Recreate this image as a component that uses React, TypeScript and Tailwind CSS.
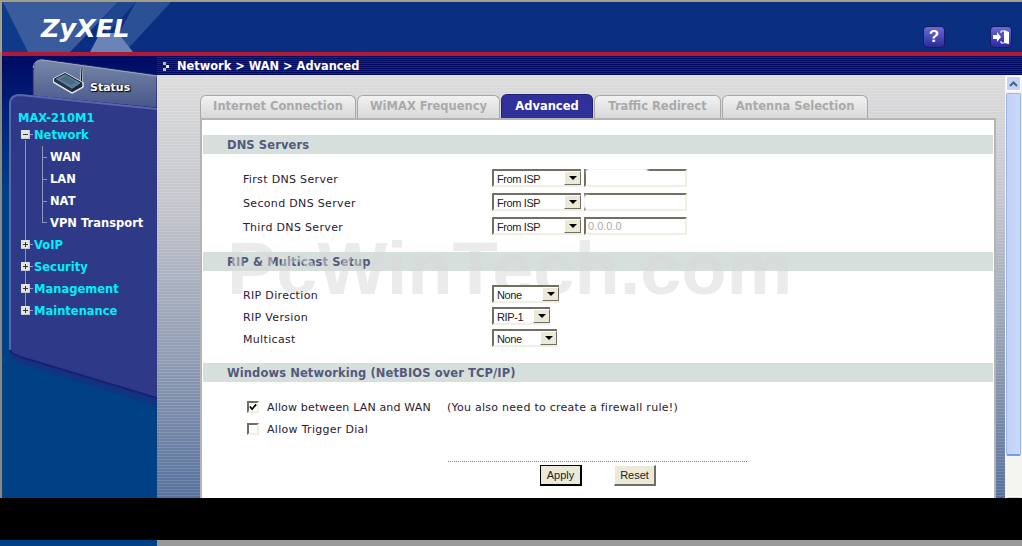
import React from "react";

const tabs = [
  { label: "Internet Connection", width: "w-[156px]" },
  { label: "WiMAX Frequency", width: "w-[143px]" },
  { label: "Advanced", width: "w-[92px]", active: true },
  { label: "Traffic Redirect", width: "w-[127px]" },
  { label: "Antenna Selection", width: "w-[146px]" },
];

const menuGroups = ["VoIP", "Security", "Management", "Maintenance"];
const wanItems = ["WAN", "LAN", "NAT", "VPN Transport"];

const TreeBox: React.FC<{ open?: boolean }> = ({ open }) => (
  <svg width="13" height="9" viewBox="0 0 13 9" className="shrink-0">
    <rect x="0" y="0" width="9" height="9" fill="#c8c8c8" />
    <rect x="0" y="0" width="8" height="8" fill="#e4e4e4" />
    <rect x="2" y="4" width="5" height="1" fill="#333" />
    {!open && <rect x="4" y="2" width="1" height="5" fill="#333" />}
    <rect x="9" y="4" width="3" height="1" fill="#9aa0c8" />
  </svg>
);

const SidebarArt: React.FC = () => (
  <svg className="absolute inset-0" width="155" height="442" viewBox="2 56 155 442">
    <defs>
      <linearGradient id="side" x1="0" y1="0" x2="0" y2="1">
        <stop offset="0" stopColor="#000a62" />
        <stop offset="0.12" stopColor="#00207a" />
        <stop offset="0.3" stopColor="#004085" />
        <stop offset="1" stopColor="#004085" />
      </linearGradient>
      <linearGradient id="statusTab" x1="0" y1="0" x2="0" y2="1">
        <stop offset="0" stopColor="#7a88a8" />
        <stop offset="1" stopColor="#46568a" />
      </linearGradient>
    </defs>
    <rect x="2" y="56" width="155" height="442" fill="url(#side)" />
    <path d="M10 350 L10 355 Q12 362 20 364 L157 406 L157 398 Z" fill="#1d2a80" opacity="0.55" />
    <path d="M33 96 L33 70 Q34 59 42 59 L157 75 L157 108 Z" fill="url(#statusTab)" stroke="#1a2460" strokeWidth="1" />
    <path d="M33 68 Q34 60 42 60 L157 76" fill="none" stroke="#9aa6c0" strokeWidth="1" />
    <path d="M10 350 L10 104 Q10 94 20 94 L157 108 L157 398 L24 358 Q12 354 10 350 Z" fill="#2e3a87" />
    <path d="M10 350 L10 104 Q10 95 20 95 L157 109" fill="none" stroke="#5866b0" strokeWidth="2" />
    <path d="M10 350 Q12 355 24 358 L157 398" fill="none" stroke="#1a2070" strokeWidth="2" />
    <path d="M25.5 140 V312 M42.5 146 V222.5 M42 157.5 H47 M42 179.5 H47 M42 201.5 H47 M42 222.5 H47" stroke="#8c94c4" strokeWidth="1" fill="none" />
  </svg>
);

const RouterIcon: React.FC = () => (
  <svg width="34" height="29" viewBox="0 0 34 29" className="shrink-0">
    <path d="M0.5 12 L12 6 L30 16 L30 20 L19 26 L0.5 15 Z" fill="#000" stroke="#dfe3ee" strokeWidth="1.5" strokeLinejoin="round" />
    <path d="M29 1 L28.4 14" stroke="#eef0f6" strokeWidth="2.4" />
    <path d="M29 1 L28.4 14" stroke="#111" strokeWidth="1.2" />
    <path d="M1.5 12 L12 6.5 L29 16 L19 22.5 Z" fill="#5a7a96" stroke="#10182c" strokeWidth="1" />
    <path d="M1.5 12 L1.5 14.5 L19 25 L19 22.5 Z" fill="#26384e" />
    <path d="M19 22.5 L19 25 L29 19.5 L29 16 Z" fill="#1a2a40" />
    <path d="M7 12 L13 9 L23 15 L18 18 Z" fill="#4a6880" />
  </svg>
);

const Header: React.FC = () => (
  <header className="relative flex h-[52px] shrink-0 items-start border-t-2 border-l-2 border-[#a39e86] bg-[#0b2f80]">
    <svg className="absolute inset-0" width="180" height="50" viewBox="2 2 180 50">
      <path d="M2 2 L15 2 L38 52 L2 52 Z" fill="#0f3a8c" />
      <path d="M3 2 L118 2 L70 52 L28 52 Z" fill="#3a5c9c" />
      <path d="M118 2 L136 2 L108 33 L100 22 Z" fill="#1e4690" />
      <path d="M136 2 L171 2 L125 52 L115 40 Z" fill="#2b5096" />
      <path d="M100 33 L118 33 L133 52 L90 52 Z" fill="#6a84b8" />
    </svg>
    <div className="relative mt-[8px] ml-[39px] text-[25.5px] leading-[36px] font-bold italic text-white">
      ZyXEL
    </div>
    <div className="relative mt-[24px] mr-[10px] ml-auto flex gap-[45px]">
      <div className="flex h-[22px] w-[22px] items-center justify-center rounded-[4px] border border-[#1a1a60] bg-gradient-to-b from-[#6a6ad8] to-[#2a2a98] text-[17px] font-bold text-white font-['Liberation_Sans',sans-serif]">
        ?
      </div>
      <div className="flex h-[22px] w-[22px] items-center justify-center rounded-[4px] border border-[#1a1a60] bg-gradient-to-b from-[#6a6ad8] to-[#2a2a98]">
        <svg width="18" height="16" viewBox="0 0 18 16">
          <path d="M1 6 H5 V3 L9 8 L5 13 V10 H1 Z" fill="#fff" />
          <path d="M9 2 H12 M9 14 H12 M9 2 V4 M9 12 V14" stroke="#fff" strokeWidth="1" />
          <path d="M12 1 L17 3 V15 L12 14 Z" fill="#fff" />
        </svg>
      </div>
    </div>
  </header>
);

const Sidebar: React.FC = () => (
  <aside className="relative w-[157px] shrink-0 border-l-2 border-[#8a8a80]">
    <SidebarArt />
    <div className="relative flex items-center pt-[11px] pl-[51px]">
      <RouterIcon />
      <span className="mt-[13px] ml-[3px] text-[11px] font-bold text-white [text-shadow:1px_1px_1px_#000,0_0_2px_#000]">Status</span>
    </div>
    <nav className="relative mt-[15px] flex flex-col pl-[16px] text-[11.5px] leading-[22px] font-bold">
      <div className="h-[12px] leading-[12px] text-[#00f0f8]">MAX-210M1</div>
      <div className="flex h-[22px] items-center pl-[3px] text-[#00f0f8]">
        <TreeBox open />
        <span>Network</span>
      </div>
      {wanItems.map((item) => (
        <div key={item} className="h-[22px] pl-[32px] text-white">{item}</div>
      ))}
      {menuGroups.map((item) => (
        <div key={item} className="flex h-[22px] items-center pl-[3px] text-[#00f0f8]">
          <TreeBox />
          <span>{item}</span>
        </div>
      ))}
    </nav>
  </aside>
);

const Select: React.FC<{ value: string; width: string }> = ({ value, width }) => (
  <div className={`relative z-10 flex h-[18px] items-center justify-between border-2 border-r-0 border-b-[#f1efe2] border-t-[#716f64] border-l-[#716f64] bg-white ${width}`}>
    <span className="mt-[2px] pl-[3px] text-[11px] tracking-[-0.4px] text-[#222] font-['Liberation_Sans',sans-serif]">{value}</span>
    <span className="flex h-full w-[17px] items-center justify-center border border-[#fff] border-r-[#716f64] border-b-[#716f64] bg-[#ece9d8]">
      <span className="h-0 w-0 border-x-[4px] border-t-[4px] border-x-transparent border-t-black" />
    </span>
  </div>
);

const IpInput: React.FC<{ value?: string; smudge?: "top" | "left" }> = ({ value, smudge }) => (
  <div className="relative h-[18px] w-[103px] border-2 border-r-[#f1efe2] border-b-[#f1efe2] border-t-[#716f64] border-l-[#716f64] bg-white pl-[2px] text-[11px] leading-[15px] text-[#aaa] font-['Liberation_Sans',sans-serif]">
    {value}
    {smudge === "top" && <span className="absolute -top-[3px] left-0 h-[6px] w-[62px] rounded-full bg-white blur-[1px]" />}
    {smudge === "left" && <span className="absolute top-0 -left-[3px] h-[14px] w-[7px] rounded-full bg-white blur-[1px]" />}
  </div>
);

const SectionBar: React.FC<{ title: string }> = ({ title }) => (
  <div className="mx-px h-[19px] bg-[#d7dfdd] pl-[24px] text-[11.5px] leading-[20px] font-bold tracking-[0.1px] text-[#55597c]">{title}</div>
);

const FormRow: React.FC<{ label: string; className: string; children: React.ReactNode }> = ({ label, className, children }) => (
  <div className={`flex items-center pl-[41px] ${className}`}>
    <span className="relative z-10 mt-[4px] w-[249px] text-[11px] tracking-[0.33px] text-[#2a2030]">{label}</span>
    {children}
  </div>
);

const CheckBox: React.FC<{ checked?: boolean }> = ({ checked }) => (
  <span className="flex h-[12px] w-[12px] shrink-0 items-center justify-center border-2 border-r-[#f1efe2] border-b-[#f1efe2] border-t-[#716f64] border-l-[#716f64] bg-white">
    {checked && (
      <svg width="9" height="8" viewBox="0 0 9 8">
        <path d="M1 3.5 L3.5 6.5 L8 1" stroke="#000" strokeWidth="2" fill="none" />
      </svg>
    )}
  </span>
);

const TabCard: React.FC = () => (
  <div className="flex flex-1 flex-col">
    <div className="flex h-[23px] shrink-0 items-end">
      {tabs.map((tab) => (
        <div
          key={tab.label}
          className={
            tab.active
              ? `${tab.width} mr-[1px] flex h-[24px] items-center justify-center rounded-t-[6px] border border-b-0 border-[#222277] bg-[#30309a] text-[11.5px] font-bold text-white`
              : `${tab.width} mr-[1px] flex h-[23px] items-center justify-center rounded-t-[6px] border border-b-0 border-[#a8a8a8] bg-gradient-to-b from-[#f2f2f2] to-[#d8d8d8] text-[11.5px] font-bold text-[#aaaaaa]`
          }
        >
          {tab.label}
        </div>
      ))}
    </div>
    <div className="flex-1 border-t-2 border-r-2 border-l-2 border-[#b4b4b4] bg-white pt-[15px]">
      <SectionBar title="DNS Servers" />
      <div className="flex flex-col pt-[12px] pb-[14px]">
        {["First DNS Server", "Second DNS Server", "Third DNS Server"].map((label, i) => (
          <FormRow key={label} label={label} className="h-[24px]">
            <Select value="From ISP" width="w-[89px]" />
            <div className="ml-[3px]">
              <IpInput value={i === 2 ? "0.0.0.0" : ""} smudge={i === 0 ? "top" : i === 1 ? "left" : undefined} />
            </div>
          </FormRow>
        ))}
      </div>
      <SectionBar title="RIP & Multicast Setup" />
      <div className="flex flex-col pt-[12px] pb-[14px]">
        <FormRow label="RIP Direction" className="h-[22px]"><Select value="None" width="w-[67px]" /></FormRow>
        <FormRow label="RIP Version" className="h-[22px]"><Select value="RIP-1" width="w-[58px]" /></FormRow>
        <FormRow label="Multicast" className="h-[22px]"><Select value="None" width="w-[65px]" /></FormRow>
      </div>
      <SectionBar title="Windows Networking (NetBIOS over TCP/IP)" />
      <div className="flex flex-col pt-[14px] pl-[45px] text-[11px] text-[#2a2030]">
        <div className="flex h-[22px] items-center">
          <CheckBox checked />
          <span className="mt-[3px] ml-[8px] w-[180px] tracking-[0.16px]">Allow between LAN and WAN</span>
          <span className="mt-[3px] tracking-[0.26px]">(You also need to create a firewall rule!)</span>
        </div>
        <div className="flex h-[22px] items-center">
          <CheckBox />
          <span className="mt-[3px] ml-[8px] tracking-[0.3px]">Allow Trigger Dial</span>
        </div>
      </div>
      <div className="mt-[21px] ml-[246px] w-[299px] border-t border-dotted border-[#808080]" />
      <div className="mt-[3px] ml-[338px] flex gap-[32px] text-[11px] text-[#222] font-['Liberation_Sans',sans-serif]">
        <div className="flex h-[21px] w-[42px] items-center justify-center border border-r-2 border-b-2 border-black bg-[#ece9d8]">Apply</div>
        <div className="flex h-[21px] w-[42px] items-center justify-center border border-r-2 border-b-2 border-[#fff] border-r-[#716f64] border-b-[#716f64] bg-[#ece9d8]">Reset</div>
      </div>
    </div>
  </div>
);

const Scrollbar: React.FC = () => (
  <div className="flex w-[17px] shrink-0 flex-col overflow-hidden bg-[#f4f4f0] px-[1px] pt-[1px]">
    <div className="flex h-[15px] shrink-0 items-center justify-center rounded-[2px] border border-[#fff] bg-[#c4d4f8]">
      <svg width="9" height="6" viewBox="0 0 9 6">
        <path d="M1 5 L4.5 1.5 L8 5" stroke="#4d6185" strokeWidth="2" fill="none" />
      </svg>
    </div>
    <div className="mt-[2px] h-[363px] shrink-0 rounded-[2px] border border-b-2 border-[#9db4e6] border-b-[#7a9ce0] bg-gradient-to-r from-[#c0d0f8] to-[#ccd9fa]" />
    <div className="mt-[40px] h-[15px] shrink-0 rounded-[2px] border border-[#fff] bg-[#c4d4f8]" />
  </div>
);

const App: React.FC = () => {
  return (
    <div className="relative flex h-[546px] w-[1022px] flex-col overflow-hidden bg-[#999999] text-[11px] font-['DejaVu_Sans',sans-serif]">
      <Header />
      <div className="h-[4px] shrink-0 border-l-2 border-[#8a8a80] bg-[#b01a35]" />
      <main className="flex h-[442px] shrink-0">
        <Sidebar />
        <div className="flex min-w-0 flex-1 flex-col">
          <div className="flex h-[19px] shrink-0 items-center bg-[repeating-linear-gradient(180deg,#000a62_0_1px,#0b2a80_1px_2px)] pt-[3px] pl-[6px] text-[11.4px] font-bold text-white">
            <svg width="8" height="10" viewBox="0 0 8 10" className="mr-[6px]">
              <rect x="0" y="0" width="3" height="3" fill="#bbb" />
              <rect x="3" y="3" width="3" height="3" fill="#eee" />
              <rect x="0" y="6" width="3" height="3" fill="#bbb" />
            </svg>
            Network &gt; WAN &gt; Advanced
          </div>
          <div className="flex min-h-0 flex-1">
            <div className="flex min-w-0 flex-1 bg-[repeating-linear-gradient(180deg,rgba(255,255,255,0.14)_0_1px,transparent_1px_3px),linear-gradient(180deg,#dcdcdc_0%,#c4c6cc_30%,#8a98b0_70%,#56709c_100%)] pt-[20px] pr-[9px] pl-[43px]">
              <TabCard />
            </div>
            <Scrollbar />
          </div>
        </div>
      </main>
      <div className="h-[42px] shrink-0 bg-black" />
      <div className="flex h-[6px] shrink-0">
        <div className="w-[157px] bg-[#004085]" />
      </div>
      <div className="pointer-events-none absolute top-[229px] left-[227px] text-[74px] leading-[80px] font-bold whitespace-nowrap text-[rgba(215,215,215,0.5)] font-['Liberation_Sans',sans-serif]">
        PcWinTech.com
      </div>
    </div>
  );
};

export default App;
